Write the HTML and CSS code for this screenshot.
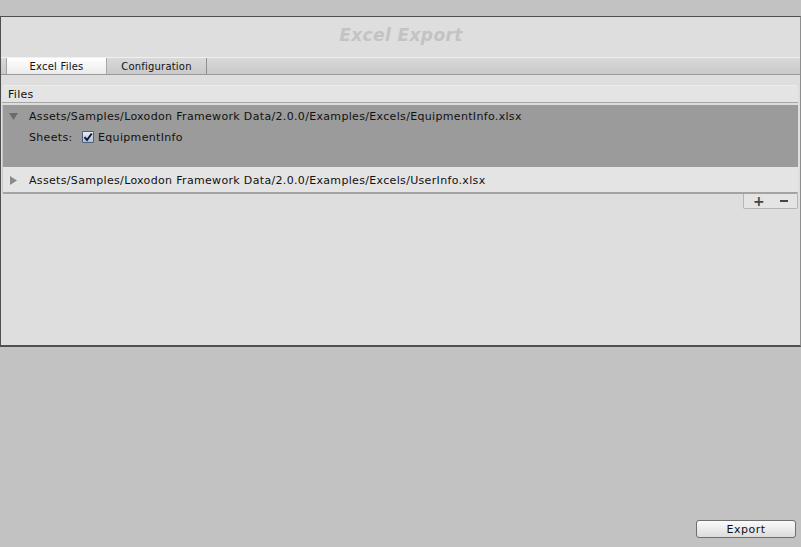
FILE: index.html
```html
<!DOCTYPE html>
<html>
<head>
<meta charset="utf-8">
<link rel="stylesheet" href="styles.css">
</head>
<body>
<div class="window">
  <div class="title">Excel Export</div>
  <div class="tabbar">
    <div class="tab-lead"></div>
    <div class="tab active">Excel Files</div>
    <div class="tab">Configuration</div>
  </div>
  <div class="content">
    <div class="files-header">Files</div>
    <div class="list">
      <div class="row selected">
        <div class="row-head">
          <svg class="arrow" width="9" height="9" viewBox="0 0 9 9"><path d="M0 1 L9 1 L4.5 8 Z" fill="#6b6b6b"/></svg>
          <span>Assets/Samples/Loxodon Framework Data/2.0.0/Examples/Excels/EquipmentInfo.xlsx</span>
        </div>
        <div class="sheets">
          <span class="sheets-label">Sheets:</span>
          <span class="checkbox"><svg width="10" height="10" viewBox="0 0 10 10"><path d="M1.5 5.2 L4 8 L8.8 1.5" fill="none" stroke="#0c1a33" stroke-width="2"/></svg></span>
          <span>EquipmentInfo</span>
        </div>
      </div>
      <div class="row">
        <div class="row-head">
          <svg class="arrow" width="9" height="9" viewBox="0 0 9 9"><path d="M1 0 L8 4.5 L1 9 Z" fill="#8a8a8a"/></svg>
          <span>Assets/Samples/Loxodon Framework Data/2.0.0/Examples/Excels/UserInfo.xlsx</span>
        </div>
      </div>
    </div>
    <div class="footer-row">
      <div class="addremove">
        <span class="pm">+</span>
        <span class="pm minus"></span>
      </div>
    </div>
  </div>
</div>
<div class="bottom">
  <button class="export">Export</button>
</div>
</body>
</html>
```

FILE: styles.css
```css
html, body {
  margin: 0;
  padding: 0;
}
body {
  background: #c2c2c2;
  font-family: "DejaVu Sans", sans-serif;
  font-size: 11px;
  color: #111;
  width: 801px;
  height: 547px;
  overflow: hidden;
}
.window {
  margin-top: 16px;
  height: 328px;
  background: #dedede;
  border-top: 1px solid #4f4f4f;
  border-left: 1px solid #4f4f4f;
  border-right: 1px solid #8e8e8e;
  border-bottom: 2px solid #4f4f4f;
  display: flex;
  flex-direction: column;
}
.title {
  height: 36px;
  padding-bottom: 4px;
  display: flex;
  align-items: center;
  justify-content: center;
  font-weight: bold;
  font-style: italic;
  font-size: 17px;
  letter-spacing: 0.4px;
  color: #c3c3c3;
  padding-left: 1px;
}
.tabbar {
  height: 16px;
  display: flex;
  border-top: 1px solid #f1f1f1;
  border-bottom: 1px solid #9a9a9a;
  background: linear-gradient(#d9d9d9, #c9c9c9);
}
.tab-lead {
  width: 5px;
  border-right: 1px solid #a4a4a4;
}
.tab {
  width: 99px;
  border-right: 1px solid #8f8f8f;
  font-size: 10px;
  letter-spacing: 0.2px;
  display: flex;
  align-items: center;
  justify-content: center;
  color: #111;
}
.tab.active {
  background: linear-gradient(#ffffff, #ebebeb);
  border-right: 1px solid #a8a8a8;
}
.content {
  padding: 10px 2px 0 1px;
  flex: 1;
}
.files-header {
  height: 16px;
  line-height: 17px;
  padding-left: 6px;
  background: #e4e4e4;
  border-top: 1px solid #ececec;
  border-bottom: 1px solid #a5a5a5;
  border-radius: 2px 2px 0 0;
  color: #111;
  letter-spacing: 0.3px;
}
.list {
  margin-top: 2px;
  background: #e4e4e4;
  border-left: 1px solid #c8c8c8;
  border-bottom: 2px solid #a3a3a3;
  border-radius: 0 0 2px 2px;
  letter-spacing: 0.33px;
}
.row {
  height: 25px;
}
.row.selected {
  height: 62px;
  background: #9b9b9b;
}
.row-head {
  display: flex;
  align-items: center;
  padding-left: 6px;
}
.row.selected .row-head {
  height: 22px;
}
.row:not(.selected) .row-head {
  height: 25px;
  padding-top: 1px;
  box-sizing: border-box;
}
.arrow {
  margin-right: 11px;
}
.sheets {
  display: flex;
  align-items: center;
  padding-left: 26px;
  height: 20px;
}
.sheets-label {
  width: 53px;
}
.checkbox {
  width: 10px;
  height: 10px;
  border: 1px solid #4d5f7e;
  background: linear-gradient(#e9eef6, #aebcd3);
  border-radius: 1px;
  margin-right: 4px;
  display: flex;
  align-items: center;
  justify-content: center;
}
.checkbox svg {
  display: block;
}
.footer-row {
  display: flex;
  justify-content: flex-end;
}
.addremove {
  box-sizing: border-box;
  width: 55px;
  height: 15px;
  background: #e4e4e4;
  border: 1px solid #b5b5b5;
  border-top: none;
  border-radius: 0 0 2px 2px;
  display: flex;
  align-items: center;
  padding-left: 9px;
  gap: 15px;
}
.pm {
  font-weight: bold;
  font-size: 14px;
  color: #444;
  line-height: 13px;
}
.minus {
  width: 8px;
  height: 2px;
  background: #444;
}
.bottom {
  display: flex;
  justify-content: flex-end;
  padding-top: 173px;
  padding-right: 5px;
}
.export {
  width: 100px;
  height: 18px;
  padding: 0;
  font-family: "DejaVu Sans", sans-serif;
  font-size: 11px;
  letter-spacing: 0.5px;
  color: #111;
  border: 1px solid #6e6e6e;
  border-radius: 3px;
  background: linear-gradient(#fafafa, #dcdcdc);
}
```
